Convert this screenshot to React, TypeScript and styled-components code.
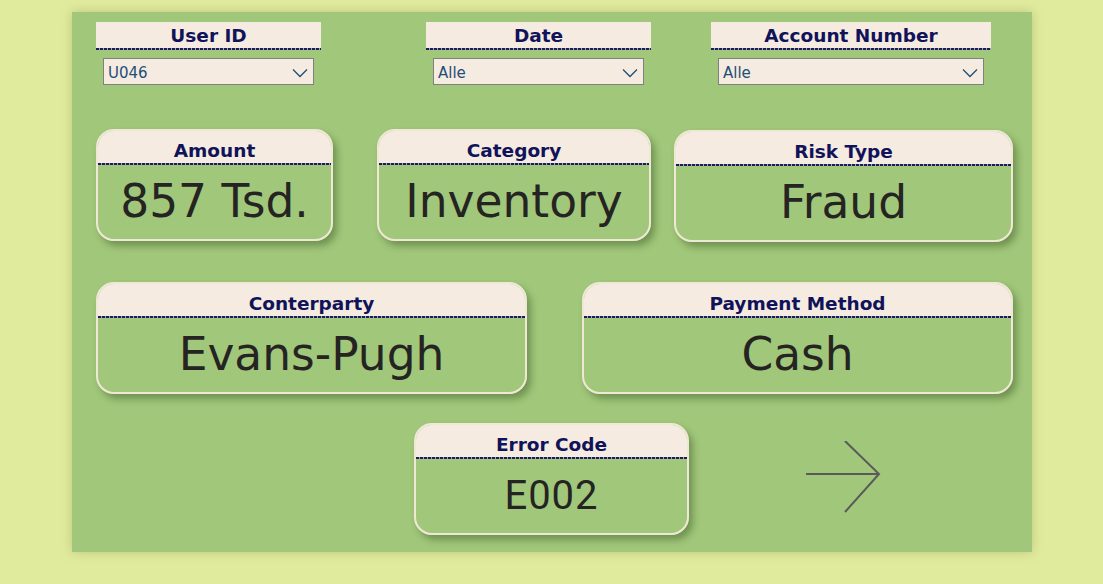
import React from "react";
import styled, { createGlobalStyle } from "styled-components";

const GlobalStyle = createGlobalStyle`
  html, body { margin: 0; padding: 0; }
  body {
    background: #e0eb9e;
    font-family: "DejaVu Sans", Verdana, sans-serif;
    width: 1103px;
    height: 584px;
    overflow: hidden;
  }
`;

const Page = styled.div`
  padding: 12px 0 0 72px;
`;

const Panel = styled.div`
  width: 960px;
  height: 540px;
  box-sizing: border-box;
  background: #a1c77a;
  box-shadow: 0 0 10px rgba(120, 130, 60, 0.35);
  padding: 10px 0 0 24px;
  display: flex;
  flex-direction: column;
`;

const FilterRow = styled.div`
  display: flex;
  align-items: flex-start;
`;

const Filter = styled.div<{ $w: number; $ml?: number }>`
  width: ${(p) => p.$w}px;
  margin-left: ${(p) => p.$ml ?? 0}px;
  display: flex;
  flex-direction: column;
`;

const FilterTitle = styled.div`
  position: relative;
  height: 28px;
  box-sizing: border-box;
  background: #f5ebe0;
  color: #10125a;
  font-weight: bold;
  font-size: 18.5px;
  line-height: 28px;
  text-align: center;
  &::after {
    content: "";
    position: absolute;
    left: 0;
    right: 0;
    bottom: 0;
    height: 2px;
    background: repeating-linear-gradient(to right, #1a1d5c 0 3px, rgba(26, 29, 92, 0.35) 3px 4px);
  }
`;

const Dropdown = styled.div`
  margin: 8px 7px 0;
  height: 27px;
  box-sizing: border-box;
  border: 1px solid #808080;
  background: #f5ebe0;
  display: flex;
  align-items: center;
  justify-content: space-between;
  padding: 2px 5px 0 4px;
  color: #1f4e79;
  font-size: 15px;
`;

const Chevron = () => (
  <svg width="16" height="10" viewBox="0 0 16 10">
    <path d="M1 1.5 L8 8.5 L15 1.5" fill="none" stroke="#1f4e79" strokeWidth="1.3" />
  </svg>
);

const CardRow = styled.div<{ $mt: number }>`
  display: flex;
  align-items: flex-start;
  margin-top: ${(p) => p.$mt}px;
`;

const Card = styled.div<{ $w: number; $ml?: number; $mt?: number }>`
  width: ${(p) => p.$w}px;
  height: 112px;
  margin-left: ${(p) => p.$ml ?? 0}px;
  margin-top: ${(p) => p.$mt ?? 0}px;
  box-sizing: border-box;
  border: 2px solid #efe8d6;
  border-radius: 18px;
  overflow: hidden;
  display: flex;
  flex-direction: column;
  box-shadow: 4px 5px 7px rgba(40, 70, 20, 0.4);
`;

const CardHeader = styled.div`
  position: relative;
  background: #f5ebe0;
  color: #10125a;
  font-weight: bold;
  font-size: 18.5px;
  line-height: 22px;
  text-align: center;
  padding: 9px 0 3px;
  &::after {
    content: "";
    position: absolute;
    left: 0;
    right: 0;
    bottom: 0;
    height: 2px;
    background: repeating-linear-gradient(to right, #1a1d5c 0 3px, rgba(26, 29, 92, 0.35) 3px 4px);
  }
`;

const CardValue = styled.div<{ $alt?: boolean }>`
  flex: 1;
  display: flex;
  align-items: center;
  justify-content: center;
  color: #252423;
  font-family: ${(p) => (p.$alt ? "Roboto, sans-serif" : '"DejaVu Sans", Verdana, sans-serif')};
  font-size: ${(p) => (p.$alt ? "40px" : "45.5px")};
  letter-spacing: ${(p) => (p.$alt ? "1px" : "0")};
  padding-bottom: 2px;
`;

const ArrowWrap = styled.div`
  margin-left: 117px;
  margin-top: 18px;
  width: 76px;
  height: 74px;
`;

const Arrow = () => (
  <svg width="76" height="74" viewBox="0 0 76 74">
    <path d="M0 33 L73 33 M39 0 L73 33 L39 71" fill="none" stroke="#5a5a5a" strokeWidth="2" />
  </svg>
);

type CardProps = { title: string; value: string; w: number; ml?: number; mt?: number; alt?: boolean };

const KPI = ({ title, value, w, ml, mt, alt }: CardProps) => (
  <Card $w={w} $ml={ml} $mt={mt}>
    <CardHeader>{title}</CardHeader>
    <CardValue $alt={alt}>{value}</CardValue>
  </Card>
);

export default function App() {
  return (
    <>
      <GlobalStyle />
      <Page>
        <Panel>
          <FilterRow>
            <Filter $w={225}>
              <FilterTitle>User ID</FilterTitle>
              <Dropdown>
                <span>U046</span>
                <Chevron />
              </Dropdown>
            </Filter>
            <Filter $w={225} $ml={105}>
              <FilterTitle>Date</FilterTitle>
              <Dropdown>
                <span>Alle</span>
                <Chevron />
              </Dropdown>
            </Filter>
            <Filter $w={280} $ml={60}>
              <FilterTitle>Account Number</FilterTitle>
              <Dropdown>
                <span>Alle</span>
                <Chevron />
              </Dropdown>
            </Filter>
          </FilterRow>
          <CardRow $mt={44}>
            <KPI title="Amount" value="857 Tsd." w={237} />
            <KPI title="Category" value="Inventory" w={274} ml={44} />
            <KPI title="Risk Type" value="Fraud" w={339} ml={23} mt={1} />
          </CardRow>
          <CardRow $mt={40}>
            <KPI title="Conterparty" value="Evans-Pugh" w={431} />
            <KPI title="Payment Method" value="Cash" w={431} ml={55} />
          </CardRow>
          <CardRow $mt={29}>
            <KPI title="Error Code" value="E002" w={275} ml={318} alt />
            <ArrowWrap>
              <Arrow />
            </ArrowWrap>
          </CardRow>
        </Panel>
      </Page>
    </>
  );
}
